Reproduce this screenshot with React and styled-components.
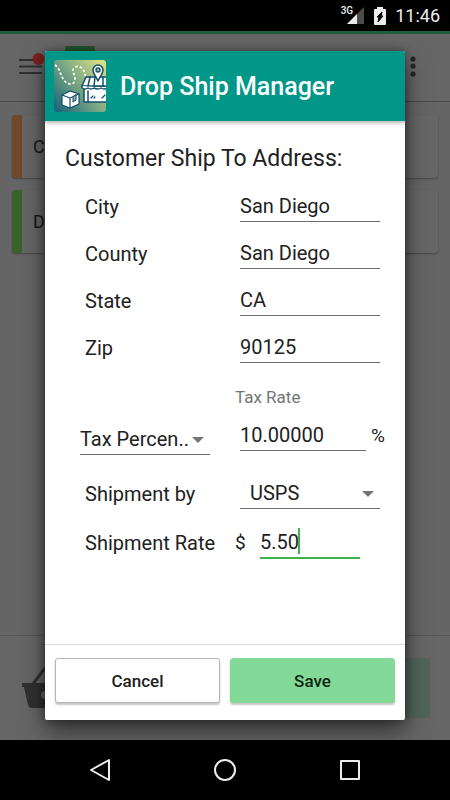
import React, { useState } from "react";
import styled, { createGlobalStyle, css } from "styled-components";

const GlobalStyle = createGlobalStyle`
  * {
    box-sizing: border-box;
  }

  body {
    margin: 0;
    background: #000;
    color: #212121;
    font-family: Roboto, "Liberation Sans", sans-serif;
  }

  button,
  input,
  select {
    font-family: inherit;
    color: inherit;
  }
`;

const Screen = styled.div`
  display: flex;
  flex-direction: column;
  min-height: 100vh;
`;

// System bars
const StatusBar = styled.header`
  display: flex;
  align-items: center;
  justify-content: flex-end;
  height: 31px;
  padding: 0 10px;
  background: #000;
  color: #ececec;
`;

const StatusIcon = styled.svg`
  display: block;
  margin-right: 9px;
`;

const Network = styled.span`
  align-self: flex-start;
  margin: 5px -7px 0 0;
  font-size: 10px;
  font-weight: 500;
  line-height: 12px;
`;

const Clock = styled.time`
  font-size: 18px;
  line-height: 20px;
`;

const NavBar = styled.nav`
  display: flex;
  justify-content: center;
  gap: 77px;
  height: 60px;
  background: #000;
`;

const NavButton = styled.button`
  display: grid;
  place-items: center;
  width: 48px;
  padding: 0;
  border: 0;
  background: none;
`;

// Dimmed page under the dialog
const Main = styled.main`
  position: relative;
  display: flex;
  flex: 1;
  flex-direction: column;
  overflow: hidden;
`;

const Page = styled.div`
  position: absolute;
  inset: 0;
  display: flex;
  flex-direction: column;
  background: #656565;
  color: #161616;
`;

const AppBar = styled.div`
  display: flex;
  justify-content: space-between;
  height: 71px;
  padding: 0 34px 0 19px;
  border-top: 3px solid #205c40;
  border-bottom: 1px solid #484848;
  background: #666;
`;

const PageList = styled.div`
  display: flex;
  flex: 1;
  flex-direction: column;
  gap: 12px;
  padding: 13px 12px;
`;

const PageCard = styled.div`
  display: flex;
  align-items: center;
  height: 63px;
  padding-left: 11px;
  border-left: 10px solid ${({ $accent }) => $accent};
  border-radius: 3px;
  background: #666;
  box-shadow: 0 1px 2px rgba(0, 0, 0, 0.3);
  font-size: 18px;
`;

const PageFooter = styled.div`
  display: flex;
  align-items: center;
  justify-content: space-between;
  height: 105px;
  padding: 0 20px;
  border-top: 1px solid #565656;
  background: #666;
`;

const PageAction = styled.div`
  width: 130px;
  height: 60px;
  border-radius: 3px;
  background: #51655b;
`;

// Dialog
const Overlay = styled.div`
  position: relative;
  display: flex;
  flex: 1;
  padding: 20px 45px;
`;

const Dialog = styled.form`
  display: flex;
  flex: 1;
  flex-direction: column;
  min-width: 0;
  border-radius: 2px;
  overflow: hidden;
  background: #fff;
  box-shadow: 0 12px 24px rgba(0, 0, 0, 0.5), 0 0 10px rgba(0, 0, 0, 0.4);
`;

const DialogHeader = styled.div`
  display: flex;
  align-items: center;
  gap: 14px;
  height: 70px;
  padding: 0 9px;
  background: #009688;
  box-shadow: 0 2px 4px rgba(0, 0, 0, 0.3);
  color: #fff;
`;

const Title = styled.h1`
  margin: 0;
  padding-top: 2px;
  font-size: 25px;
  font-weight: 500;
  line-height: 30px;
  white-space: nowrap;
`;

const DialogBody = styled.div`
  flex: 1;
  padding: 24px 20px 0;
`;

const Heading = styled.h2`
  margin: 0 0 10px;
  font-size: 23px;
  font-weight: 400;
  line-height: 28px;
  white-space: nowrap;
`;

const Row = styled.div`
  display: flex;
  align-items: center;
  height: 47px;
`;

const TaxRow = styled(Row)`
  align-items: flex-start;
  height: 62px;
  padding-top: 13px;
`;

const ShipmentRow = styled(Row)`
  height: 49px;
`;

const Label = styled.label`
  flex: 0 0 170px;
  padding-left: 20px;
  font-size: 20px;
  line-height: 24px;
`;

const SmallLabel = styled.label`
  display: block;
  margin: 16px 0 0 170px;
  color: #757575;
  font-size: 17px;
  line-height: 20px;
`;

const Field = styled.div`
  position: relative;
  display: flex;
  flex: 1;
  align-items: center;
  min-width: 0;
  padding: 0 5px;
`;

const TaxType = styled(Field)`
  flex: 0 0 170px;
  padding: 4px 25px 0 15px;
`;

const TaxField = styled(Field)`
  gap: 5px;
  padding-right: 0;
`;

const RateField = styled(Field)`
  padding: 0 25px 0 0;
`;

const Unit = styled.span`
  flex: 0 0 ${({ $width }) => $width}px;
  font-size: 19px;
  line-height: 24px;
`;

const control = css`
  flex: 1;
  width: 100%;
  min-width: 0;
  height: 31px;
  padding: 0;
  border: 0;
  border-bottom: 1px solid #6b6b6b;
  border-radius: 0;
  outline: 0;
  background: none;
  font-size: 20px;
  line-height: 24px;
`;

const Input = styled.input`
  ${control}

  ${({ $active }) =>
    $active &&
    css`
      height: 33px;
      border-bottom: 2px solid #3fb24a;
      caret-color: transparent;
    `}
`;

const Select = styled.select`
  ${control}
  appearance: none;
  padding-left: ${({ $indent }) => ($indent ? "10px" : 0)};
`;

const SelectBox = styled.div`
  position: relative;
  display: flex;
  flex: 1;
  min-width: 0;
`;

const Arrow = styled.svg`
  position: absolute;
  top: 13px;
  right: 6px;
  pointer-events: none;
`;

const RateBox = styled.div`
  position: relative;
  display: flex;
  flex: 1;
  min-width: 0;
`;

const Caret = styled.span`
  position: absolute;
  top: 2px;
  left: 38px;
  width: 2px;
  height: 26px;
  background: #3fb24a;
`;

const Actions = styled.div`
  display: flex;
  gap: 10px;
  padding: 13px 10px 17px;
  border-top: 1px solid #dcdcdc;
`;

const Button = styled.button`
  flex: 1;
  height: 45px;
  padding: 0;
  border: 1px solid ${({ $primary }) => ($primary ? "#82d998" : "#b4b4b4")};
  border-radius: 3px;
  background: ${({ $primary }) => ($primary ? "#82d998" : "#fff")};
  box-shadow: 0 2px 2px rgba(0, 0, 0, 0.22);
  color: ${({ $primary }) => ($primary ? "#0c2712" : "#212121")};
  font-size: 17px;
  font-weight: 500;
`;

const AppLogo = () => (
  <svg width="52" height="52" viewBox="0 0 52 52" aria-hidden="true">
    <defs>
      <linearGradient id="sky" x1="1" y1="0.1" x2="0" y2="0.9">
        <stop offset="0" stopColor="#dbe184" />
        <stop offset="0.45" stopColor="#84ad83" />
        <stop offset="1" stopColor="#1b687a" />
      </linearGradient>
      <clipPath id="tile">
        <rect width="52" height="52" rx="3" />
      </clipPath>
    </defs>
    <g clipPath="url(#tile)">
      <rect width="52" height="52" fill="url(#sky)" />
      <path
        d="M1 5C6 8 6 15 10 20C14 26 21 25 21 19C21 14 17 11 20 8C24 4 31 8 31 16"
        fill="none"
        stroke="#fff"
        strokeWidth="1.7"
        strokeDasharray="2.6 2"
      />
      <g stroke="#124e6c" strokeWidth="1.5" strokeLinejoin="round" strokeLinecap="round">
        <path d="M30 26H60V42H30Z" fill="#fff" />
        <path d="M34 32H60V38H34Z" fill="#fff" stroke="none" />
        <path d="M32 17H60V26H28Z" fill="#fff" />
        <path d="M28 26v2q3 2 6 0q3 2 6 0q4 2 7 0q3 2 7 0" fill="#fff" />
        <path d="M36 17l-2 9M41 17l-1 9M49 17v9M34 31V42" fill="none" />
        <path d="M37 38l2-2M40 38l1-1M48 38l3-3" fill="none" strokeWidth="1.2" />
        <path d="M44 21C42 16 39 14 39 10a5 5 0 0 1 10 0C49 14 46 16 44 21Z" fill="#fff" />
        <circle cx="44" cy="10" r="2" fill="#a5c29b" />
        <path d="M8 35L16 31L25 34V44L16 48L8 45Z" fill="#fff" strokeWidth="1.2" />
        <path d="M8 35L16 38L25 34M16 38V48" fill="none" strokeWidth="1.2" />
        <path d="M19 37V42L22 40V35Z" fill="#7fb2a4" strokeWidth="1" />
      </g>
    </g>
  </svg>
);

const DropDown = ({ id, label, value, indent }) => (
  <SelectBox>
    <Select id={id} aria-label={label} defaultValue={value} $indent={indent}>
      <option>{value}</option>
    </Select>
    <Arrow width="12" height="6" viewBox="0 0 12 6" aria-hidden="true">
      <path d="M0 0H12L6 6Z" fill="#757575" />
    </Arrow>
  </SelectBox>
);

const addressFields = [
  { id: "city", label: "City", value: "San Diego" },
  { id: "county", label: "County", value: "San Diego" },
  { id: "state", label: "State", value: "CA" },
  { id: "zip", label: "Zip", value: "90125" },
];

const Backdrop = () => (
  <Page aria-hidden="true">
    <AppBar>
      <svg width="80" height="60" viewBox="0 0 80 60">
        <path d="M0 26H23M0 32.500H23M0 39H23" stroke="#303030" strokeWidth="2" />
        <circle cx="19.500" cy="25" r="6" fill="#7c2020" />
        <rect x="46" y="12" width="30" height="30" rx="2" fill="#24562f" />
      </svg>
      <svg width="6" height="60" viewBox="0 0 6 60" fill="#262626">
        <circle cx="3" cy="25" r="2.600" />
        <circle cx="3" cy="32" r="2.600" />
        <circle cx="3" cy="40" r="2.600" />
      </svg>
    </AppBar>
    <PageList>
      <PageCard $accent="#714828">C</PageCard>
      <PageCard $accent="#38642c">D</PageCard>
    </PageList>
    <PageFooter>
      <svg width="54" height="46" viewBox="0 0 54 46" fill="#303030">
        <path d="M13 19L25 3M41 19L29 3" stroke="#303030" strokeWidth="3" />
        <path d="M2 18H52V22H50L45 40Q44 43 41 43H12Q9 43 8 40L4 22H2Z" />
        <circle cx="25" cy="30" r="4" fill="#666" />
      </svg>
      <PageAction />
    </PageFooter>
  </Page>
);

const App = () => {
  const [rate, setRate] = useState("5.50");

  return (
    <Screen>
      <GlobalStyle />
      <StatusBar>
        <Network>3G</Network>
        <StatusIcon width="19" height="18" viewBox="0 0 19 18" aria-hidden="true">
          <path d="M18 0V17H1Z" fill="#4b4b4b" />
          <path d="M11 7V17H1Z" fill="#ececec" />
        </StatusIcon>
        <StatusIcon width="12" height="18" viewBox="0 0 12 18" aria-hidden="true">
          <path d="M3 0H9V2H11Q12 2 12 3V17Q12 18 11 18H1Q0 18 0 17V3Q0 2 1 2H3Z" fill="#ececec" />
          <path d="M8 5L3 10H5L4 15L9 9H7Z" fill="#000" stroke="#000" />
        </StatusIcon>
        <Clock>11:46</Clock>
      </StatusBar>

      <Main>
        <Backdrop />
        <Overlay>
          <Dialog role="dialog" aria-labelledby="title" onSubmit={(e) => e.preventDefault()}>
            <DialogHeader>
              <AppLogo />
              <Title id="title">Drop Ship Manager</Title>
            </DialogHeader>

            <DialogBody>
              <Heading>Customer Ship To Address:</Heading>
              {addressFields.map(({ id, label, value }) => (
                <Row key={id}>
                  <Label htmlFor={id}>{label}</Label>
                  <Field>
                    <Input id={id} defaultValue={value} />
                  </Field>
                </Row>
              ))}

              <SmallLabel htmlFor="taxRate">Tax Rate</SmallLabel>
              <TaxRow>
                <TaxType>
                  <DropDown id="taxType" label="Tax type" value="Tax Percen.." />
                </TaxType>
                <TaxField>
                  <Input id="taxRate" defaultValue="10.00000" />
                  <Unit $width={14}>%</Unit>
                </TaxField>
              </TaxRow>

              <ShipmentRow>
                <Label htmlFor="carrier">Shipment by</Label>
                <Field>
                  <DropDown id="carrier" value="USPS" indent />
                </Field>
              </ShipmentRow>
              <ShipmentRow>
                <Label htmlFor="shipRate">Shipment Rate</Label>
                <RateField>
                  <Unit $width={25}>$</Unit>
                  <RateBox>
                    <Input
                      id="shipRate"
                      value={rate}
                      onChange={(e) => setRate(e.target.value)}
                      $active
                    />
                    <Caret />
                  </RateBox>
                </RateField>
              </ShipmentRow>
            </DialogBody>

            <Actions>
              <Button type="button">Cancel</Button>
              <Button type="submit" $primary>
                Save
              </Button>
            </Actions>
          </Dialog>
        </Overlay>
      </Main>

      <NavBar>
        <NavButton aria-label="Back">
          <svg width="24" height="24" viewBox="0 0 24 24" fill="none" stroke="#ececec" strokeWidth="2" strokeLinejoin="round">
            <path d="M21 2V22L3 12Z" />
          </svg>
        </NavButton>
        <NavButton aria-label="Home">
          <svg width="24" height="24" viewBox="0 0 24 24" fill="none" stroke="#ececec" strokeWidth="2">
            <circle cx="12" cy="12" r="10" />
          </svg>
        </NavButton>
        <NavButton aria-label="Recent apps">
          <svg width="24" height="24" viewBox="0 0 24 24" fill="none" stroke="#ececec" strokeWidth="2" strokeLinejoin="round">
            <rect x="3" y="3" width="18" height="18" />
          </svg>
        </NavButton>
      </NavBar>
    </Screen>
  );
};

export default App;
